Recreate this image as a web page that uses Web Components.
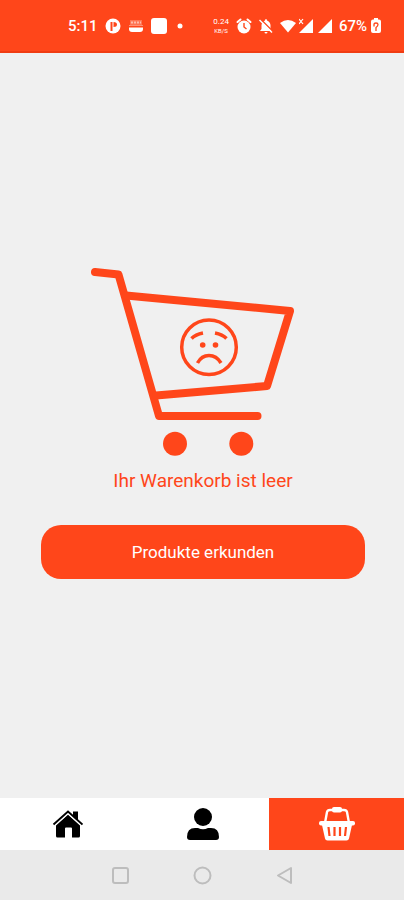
<!DOCTYPE html>
<html lang="de">
<head>
<meta charset="utf-8">
<meta name="viewport" content="width=device-width, initial-scale=1">
<title>Warenkorb</title>
<style>
  :root { --accent: #ff461a; --page: #f0f0f0; --system: #eaeaea; }
  body { margin: 0; background: var(--page); font-family: Roboto, "Noto Sans", sans-serif; }
</style>
</head>
<body>
<cart-screen></cart-screen>
<script>
const define = (name, html) => {
  const template = document.createElement('template');
  template.innerHTML = html;
  customElements.define(name, class extends HTMLElement {
    constructor() {
      super();
      this.attachShadow({ mode: 'open' }).append(template.content.cloneNode(true));
    }
  });
};

define('status-bar', `
<style>
  :host { display: flex; align-items: center; justify-content: space-between; box-sizing: border-box; height: 53px;
    padding: 0 23px 0 68px; background: var(--accent); border-bottom: 2px solid #f03c12; color: #fff;
    font-size: 15px; font-weight: 500; line-height: 20px; }
  .group { display: flex; align-items: center; }
  .left { gap: 7px; }
  .right { gap: 7px; }
  .signals { display: flex; gap: 3px; }
  .power { display: flex; align-items: center; gap: 4px; }
  .rate { display: flex; flex-direction: column; font-size: 8px; line-height: 10px; text-align: center; font-weight: 400; }
  .rate small { font-size: 6px; line-height: 8px; }
  svg { display: block; fill: #fff; }
</style>
<div class="group left">
  <span>5:11</span>
  <svg width="16" height="16" viewBox="0 0 16 16"><circle cx="8" cy="8" r="7.500"/><path d="M6.500 13V4" fill="none" stroke="#ff461a" stroke-width="2"/><path d="M8.500 4v5q3.500 0 3.500-2.500T8.500 4z" fill="#ff461a"/></svg>
  <svg width="16" height="16" viewBox="0 0 16 16"><path d="M1 9.500h14v1.500q0 3-3 3H4q-3 0-3-3z"/><path d="M2 2h12v5H2z" opacity=".25"/><path d="M3 4.500h10" stroke="#fff" stroke-width="2" stroke-dasharray="2 1" opacity=".5"/><path d="M1 7.500h14" stroke="#fff" opacity=".4"/></svg>
  <svg width="16" height="16" viewBox="0 0 16 16"><rect width="16" height="16" rx="3"/></svg>
  <svg width="16" height="16" viewBox="0 0 16 16"><circle cx="6" cy="8" r="2.500"/></svg>
</div>
<div class="group right">
  <span class="rate"><span>0.24</span><small>KB/S</small></span>
  <svg width="16" height="16" viewBox="0 0 16 16"><circle cx="8" cy="9" r="6.500"/><path d="M1.500 4l3-2.500M14.500 4l-3-2.500" stroke="#fff" stroke-width="2" stroke-linecap="round"/><path d="M8 5v4l2.500 2" fill="none" stroke="#ff461a" stroke-width="1.400"/></svg>
  <svg width="14" height="16" viewBox="0 0 14 16"><path d="M7 1q1 0 1 1.500Q11 3.500 11.500 7v4l1.500 2H1l1.500-2V7Q3 3.500 6 2.500 6 1 7 1zM5.500 14h3q0 1.500-1.500 1.500T5.500 14z"/><path d="M1.500 1l12 12" stroke="#ff461a" stroke-width="1.400"/><path d="M.5 2l12.500 12.500" stroke="#fff" stroke-width="1.400"/></svg>
  <div class="signals">
    <svg width="16" height="16" viewBox="0 0 16 16"><path d="M0 5Q8-1 16 5L8 14.500z"/></svg>
    <svg width="14" height="16" viewBox="0 0 14 16"><path d="M14 1v14H0z"/><path d="M0 1l4 5M4 1L0 6" stroke="#fff" stroke-width="1.200"/></svg>
    <svg width="16" height="16" viewBox="0 0 16 16"><path d="M16 1v14H2z"/></svg>
  </div>
  <div class="power"><span>67%</span>
    <svg width="10" height="16" viewBox="0 0 10 16"><path d="M3 0h4v1.500h1q2 0 2 2V13q0 2-2 2H2q-2 0-2-2V3.500q0-2 2-2h1z"/><path d="M3 8.500V6.500Q3 5 5 5t2 1.500q0 1.500-2 3v3.500" fill="none" stroke="#ff461a" stroke-width="1.300"/></svg>
  </div>
</div>`);

define('sad-cart', `
<style>
  :host { display: block; }
  svg { display: block; fill: none; stroke: var(--accent); stroke-linecap: round; stroke-linejoin: round; }
  .solid { fill: var(--accent); stroke: none; }
</style>
<svg width="224" height="190" viewBox="91 267 224 190" role="img" aria-label="Leerer Warenkorb">
  <g stroke-width="8">
    <path d="M95 272l23.500 2.500L159 416h98.500"/>
    <path d="M126 295.500L290 311l-23 75-111 9.500"/>
  </g>
  <g class="solid"><circle cx="175" cy="443.700" r="12"/><circle cx="241.300" cy="443.700" r="12"/><circle cx="202.700" cy="345" r="2.800"/><circle cx="215.500" cy="345" r="2.800"/></g>
  <g stroke-width="3.500"><circle cx="209" cy="347.300" r="27.300"/></g>
  <g stroke-width="3.500" stroke-linecap="butt"><path d="M191.500 338.500q4-4 11.500-5.500M215 333q7.500 1.500 11.500 5.500M197.500 363q4-7.500 11.500-7.500t12 7.500"/></g>
</svg>`);

define('action-button', `
<style>
  :host { display: block; }
  button { display: block; width: 100%; height: 54px; border: 0; border-radius: 20px; background: var(--accent);
    color: #fff; font: inherit; font-size: 17px; line-height: 24px; cursor: pointer; }
</style>
<button type="button"><slot></slot></button>`);

define('empty-cart', `
<style>
  :host { display: flex; flex: 1; flex-direction: column; align-items: center; justify-content: center; padding: 0 39px 6px 41px; }
  p { margin: 12px 0 32px; color: var(--accent); font-size: 19px; line-height: 24px; }
  action-button { align-self: stretch; }
</style>
<sad-cart></sad-cart>
<p><slot></slot></p>
<action-button>Produkte erkunden</action-button>`);

define('tab-item', `
<style>
  :host { display: block; flex: 1; background: #fff; color: #000; }
  :host([active]) { background: var(--accent); color: #fff; }
  button { display: flex; align-items: center; justify-content: center; width: 100%; height: 52px; padding: 0; border: 0;
    background: none; color: inherit; cursor: pointer; }
</style>
<button type="button"><slot></slot></button>`);

define('tab-bar', `
<style>
  :host { display: block; }
  nav { display: flex; }
  svg { display: block; fill: currentColor; }
</style>
<nav aria-label="Hauptnavigation">
  <tab-item><svg width="32" height="32" viewBox="0 0 32 32" role="img" aria-label="Startseite"><path d="M22 3.500h5V13l-5-5z"/><path d="M5 17L17 6.500 29 17v11q0 1.500-1.500 1.500H21V20.500q0-1-1-1h-5q-1 0-1 1v9H6.500Q5 29.500 5 28z"/><path d="M3.500 18L17 5.800 30.500 18" fill="none" stroke="#fff" stroke-width="1.200"/><path d="M2.500 16.500L17 3.500l14.500 13" fill="none" stroke="#000" stroke-width="1.900"/></svg></tab-item>
  <tab-item><svg width="34" height="34" viewBox="0 0 34 34" role="img" aria-label="Profil"><circle cx="18" cy="10" r="9"/><path d="M2 30q0-9 8-9h3q5 2.500 10 0h3q8 0 8 9 0 3-3 3H5q-3 0-3-3z"/></svg></tab-item>
  <tab-item active><svg width="38" height="34" viewBox="0 0 38 34" role="img" aria-label="Warenkorb"><path d="M7 16L9 5q.5-2 3-2h14q2.500 0 3 2l2 11" fill="none" stroke="currentColor" stroke-width="2.400"/><rect x="14" y="0" width="10" height="5.500" rx="2"/><rect x="1" y="14" width="36" height="4.500" rx="2"/><path d="M4 18h30l-3 13.500q-.4 2-2.500 2h-19q-2.100 0-2.500-2z"/><path d="M10.500 20l1 9M16.500 20v9M22 20v9M28 20l-1 9" stroke="#ff461a" stroke-width="2.200"/></svg></tab-item>
</nav>`);

define('system-nav', `
<style>
  :host { display: block; background: var(--system); }
  div { display: flex; align-items: center; justify-content: center; gap: 58px; height: 50px; }
  button { display: block; padding: 0; border: 0; background: none; cursor: pointer; }
  svg { display: block; fill: none; stroke: #bdbdbd; stroke-width: 2; stroke-linejoin: round; }
</style>
<div>
  <button type="button" aria-label="Übersicht"><svg width="24" height="24" viewBox="0 0 24 24"><rect x="5" y="5" width="15" height="15" rx="2"/></svg></button>
  <button type="button" aria-label="Home"><svg width="24" height="24" viewBox="0 0 24 24"><circle cx="12.500" cy="12.500" r="8"/></svg></button>
  <button type="button" aria-label="Zurück"><svg width="24" height="24" viewBox="0 0 24 24"><path d="M6 12.500L19 5v15z"/></svg></button>
</div>`);

define('cart-screen', `
<style>
  :host { display: flex; flex-direction: column; min-height: 100vh; background: var(--page); }
</style>
<status-bar></status-bar>
<empty-cart>Ihr Warenkorb ist leer</empty-cart>
<tab-bar></tab-bar>
<system-nav></system-nav>`);
</script>
</body>
</html>
